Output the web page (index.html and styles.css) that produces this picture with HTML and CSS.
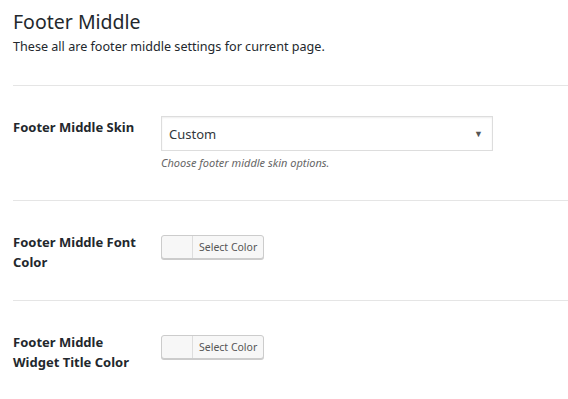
FILE: index.html
```html
<!DOCTYPE html>
<html lang="en">
<head>
    <meta charset="UTF-8">
    <title>Footer Middle</title>
    <link rel="stylesheet" href="styles.css">
</head>
<body>
    <div class="section">
        <h2 class="section-title">Footer Middle</h2>
        <p class="section-desc">These all are footer middle settings for current page.</p>

        <div class="field">
            <div class="field-label">Footer Middle Skin</div>
            <div class="field-input">
                <div class="select">
                    <span>Custom</span>
                    <span class="arrow">&#9660;</span>
                </div>
                <p class="help">Choose footer middle skin options.</p>
            </div>
        </div>

        <div class="field">
            <div class="field-label">Footer Middle Font Color</div>
            <div class="field-input">
                <button class="color-btn"><span class="swatch"></span><span class="color-text">Select Color</span></button>
            </div>
        </div>

        <div class="field">
            <div class="field-label">Footer Middle Widget Title Color</div>
            <div class="field-input">
                <button class="color-btn"><span class="swatch"></span><span class="color-text">Select Color</span></button>
            </div>
        </div>
    </div>
</body>
</html>
```

FILE: styles.css
```css
body {
    margin: 0;
    background-color: #fff;
    font-family: "Noto Sans", "Open Sans", sans-serif;
    color: #23282d;
}

.section {
    padding: 9px 0 0 13px;
}

.section-title {
    font-size: 19.5px;
    font-weight: 400;
    margin: 0;
    line-height: 26px;
}

.section-desc {
    font-size: 12.6px;
    margin: 3px 0 0;
    line-height: 18px;
}

.field {
    display: flex;
    border-top: 1px solid #e5e5e5;
    padding: 30px 0 28px;
}

.section-desc + .field {
    margin-top: 29px;
}

.field-label {
    width: 130px;
    margin-right: 18px;
    font-size: 13px;
    font-weight: 700;
    line-height: 20px;
    padding-top: 1px;
}

.select {
    width: 316px;
    height: 33px;
    padding: 0 7px;
    border: 1px solid #ddd;
    box-shadow: inset 0 1px 2px rgba(0, 0, 0, 0.07);
    display: flex;
    align-items: center;
    justify-content: space-between;
    font-size: 13px;
    color: #32373c;
}

.arrow {
    font-size: 9px;
    color: #555;
    margin-right: 2px;
}

.help {
    font-size: 11px;
    font-style: italic;
    color: #666;
    margin: 4px 0 2px;
}

.color-btn {
    display: flex;
    align-items: stretch;
    height: 24px;
    margin-top: 4px;
    padding: 0;
    border: 1px solid #ccc;
    border-radius: 3px;
    background-color: #f7f7f7;
    box-shadow: 0 1px 0 #ccc;
    font-family: inherit;
    cursor: pointer;
}

.swatch {
    width: 30px;
    border-right: 1px solid #ddd;
}

.color-text {
    font-size: 10.5px;
    color: #555;
    line-height: 22px;
    padding: 0 6px;
}
```
